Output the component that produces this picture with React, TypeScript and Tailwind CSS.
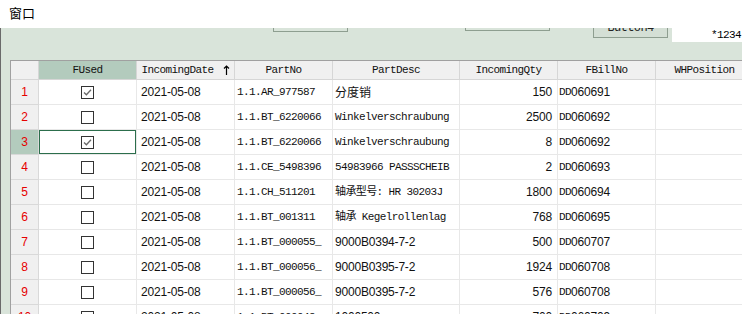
import React from "react";

const MONO = "font-['Liberation_Mono','Noto_Sans_CJK_SC',monospace] text-[11px] tracking-[-0.6px]";
const SANS = "font-['Liberation_Sans','Noto_Sans_CJK_SC',sans-serif] text-[12px] tracking-[-0.2px]";

type Row = {
  n: number;
  checked: boolean;
  date: string;
  part: string;
  desc: React.ReactNode;
  qty: string;
  bill: string;
};

const Sans = ({ children }: { children: React.ReactNode }) => <span className={SANS}>{children}</span>;
const Mono = ({ children }: { children: React.ReactNode }) => <span className={MONO}>{children}</span>;

const rows: Row[] = [
  { n: 1, checked: true, date: "2021-05-08", part: "1.1.AR_977587", desc: <span className="font-['Noto_Sans_CJK_SC',sans-serif] text-[12px]">分度销</span>, qty: "150", bill: "060691" },
  { n: 2, checked: false, date: "2021-05-08", part: "1.1.BT_6220066", desc: <Mono>Winkelverschraubung</Mono>, qty: "2500", bill: "060692" },
  { n: 3, checked: true, date: "2021-05-08", part: "1.1.BT_6220066", desc: <Mono>Winkelverschraubung</Mono>, qty: "8", bill: "060692" },
  { n: 4, checked: false, date: "2021-05-08", part: "1.1.CE_5498396", desc: <Mono>54983966 PASSSCHEIB</Mono>, qty: "2", bill: "060693" },
  { n: 5, checked: false, date: "2021-05-08", part: "1.1.CH_511201", desc: <Mono>轴承型号: HR 30203J</Mono>, qty: "1800", bill: "060694" },
  { n: 6, checked: false, date: "2021-05-08", part: "1.1.BT_001311", desc: <Mono>轴承 Kegelrollenlag</Mono>, qty: "768", bill: "060695" },
  { n: 7, checked: false, date: "2021-05-08", part: "1.1.BT_000055_", desc: <Sans>9000B0394-7-2</Sans>, qty: "500", bill: "060707" },
  { n: 8, checked: false, date: "2021-05-08", part: "1.1.BT_000056_", desc: <Sans>9000B0395-7-2</Sans>, qty: "1924", bill: "060708" },
  { n: 9, checked: false, date: "2021-05-08", part: "1.1.BT_000056_", desc: <Sans>9000B0395-7-2</Sans>, qty: "576", bill: "060708" },
  { n: 10, checked: false, date: "2021-05-08", part: "1.1.BT_000048", desc: <Sans>1000500</Sans>, qty: "700", bill: "060709" },
];

const Check = ({ checked }: { checked: boolean }) => (
  <svg width="13" height="13" viewBox="0 0 13 13">
    <rect x="0.5" y="0.5" width="12" height="12" fill="white" stroke="#333" strokeWidth="1" />
    {checked && <path d="M3 6.5 L5.4 8.8 L10 3.8" fill="none" stroke="#6a6a6a" strokeWidth="1.3" />}
  </svg>
);

const COLS = "grid grid-cols-[28px_98px_98px_98px_127px_98px_98px_98px]";

export default function App() {
  const headers = ["FUsed", "IncomingDate", "PartNo", "PartDesc", "IncomingQty", "FBillNo", "WHPosition"];
  return (
    <div className="w-[742px] h-[314px] overflow-hidden flex flex-col bg-white">
      <div className="h-[28px] shrink-0 flex items-center pl-[9px] pb-[2px] text-[13px] text-black font-['Noto_Sans_CJK_SC',sans-serif]">
        窗口
      </div>
      <div className="flex-1 flex flex-col bg-[#d9e4da] border-l border-[#6a6a6a] overflow-hidden">
        <div className="h-[32px] shrink-0 flex items-start overflow-hidden">
          <div className="ml-[272px] w-[75px] h-[20px] -mt-[16px] border border-[#8e9e90]" />
          <div className="ml-[117px] w-[85px] h-[20px] -mt-[17px] border border-[#8e9e90]" />
          <div className={`ml-[43px] w-[75px] h-[20px] -mt-[10px] border border-[#8e9e90] bg-[#d4dfd5] flex items-center justify-center ${MONO} text-[12px] text-[#222]`}>
            Button4
          </div>
          <div className={`ml-[4px] flex-1 h-[14px] bg-white flex items-center justify-end pr-[1px] ${MONO} text-black`}>
            *1234
          </div>
        </div>
        <div className="ml-[9px] flex-1 bg-white border-t border-l border-[#a0a0a0] overflow-hidden">
          <div className={`${COLS} h-[19px] bg-[#f0f0f0]`}>
            <div className="border-r border-b border-[#d6d6d6]" />
            {headers.map((h, i) => (
              <div
                key={h}
                className={`border-r border-b border-[#d6d6d6] flex items-center justify-center gap-[9px] ${MONO} text-[#111] ${i === 0 ? "bg-[#b3cbbd]" : ""}`}
              >
                <span>{h}</span>
                {i === 1 && (
                  <svg width="7" height="10" viewBox="0 0 7 10">
                    <path d="M3.5 1 L3.5 10 M1 3.5 L3.5 1 L6 3.5" fill="none" stroke="#000" strokeWidth="1.2" />
                  </svg>
                )}
              </div>
            ))}
          </div>
          {rows.map((r) => (
            <div key={r.n} className={`${COLS} h-[25px]`}>
              <div
                className={`border-r border-b border-[#d9d9d9] flex items-center justify-center ${SANS} text-[#e60000] ${r.n === 3 ? "bg-[#b3cbbd]" : "bg-[#f0f0f0]"}`}
              >
                {r.n}
              </div>
              <div
                className={`border-r border-b border-[#e8e8e8] flex items-center justify-center ${r.n === 3 ? "shadow-[inset_0_0_0_1px_#2c6e4c]" : ""}`}
              >
                <Check checked={r.checked} />
              </div>
              <div className={`border-r border-b border-[#e8e8e8] flex items-center pl-[4px] ${SANS} text-[#111]`}>{r.date}</div>
              <div className={`border-r border-b border-[#e8e8e8] flex items-center pl-[2px] ${MONO} text-[#111]`}>{r.part}</div>
              <div className="border-r border-b border-[#e8e8e8] flex items-center pl-[2px] text-[#111] whitespace-nowrap overflow-hidden">{r.desc}</div>
              <div className={`border-r border-b border-[#e8e8e8] flex items-center justify-end pr-[5px] ${SANS} text-[#111]`}>{r.qty}</div>
              <div className="border-r border-b border-[#e8e8e8] flex items-center pl-[1px] text-[#111] whitespace-nowrap">
                <Mono>DD</Mono>
                <Sans>{r.bill}</Sans>
              </div>
              <div className="border-r border-b border-[#e8e8e8]" />
            </div>
          ))}
        </div>
      </div>
    </div>
  );
}
